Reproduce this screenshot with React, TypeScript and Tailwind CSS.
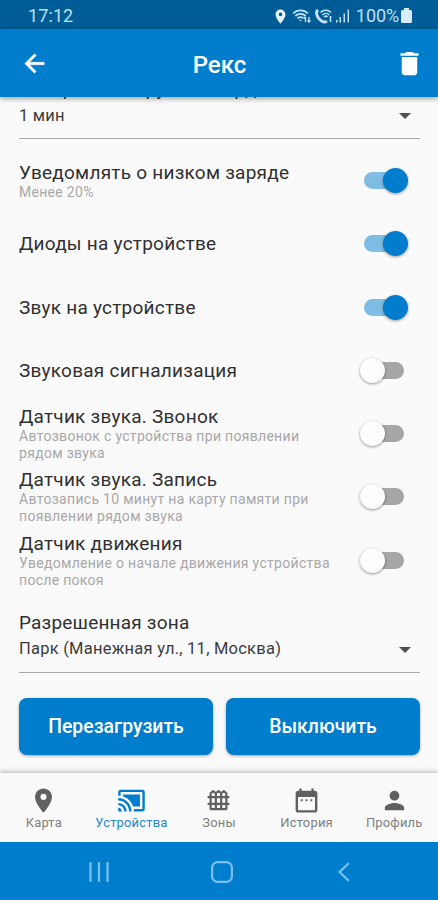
import { useState } from "react";
import type { ReactNode } from "react";
import clsx from "clsx";

type Option = {
  id: string;
  title: string;
  hint?: string;
  on: boolean;
};

const initialOptions: Option[] = [
  { id: "battery", title: "Уведомлять о низком заряде", hint: "Менее 20%", on: true },
  { id: "leds", title: "Диоды на устройстве", on: true },
  { id: "sound", title: "Звук на устройстве", on: true },
  { id: "alarm", title: "Звуковая сигнализация", on: false },
  { id: "call", title: "Датчик звука. Звонок", hint: "Автозвонок с устройства при появлении рядом звука", on: false },
  { id: "record", title: "Датчик звука. Запись", hint: "Автозапись 10 минут на карту памяти при появлении рядом звука", on: false },
  { id: "motion", title: "Датчик движения", hint: "Уведомление о начале движения устройства после покоя", on: false },
];

function Icon({ className, children }: { className?: string; children: ReactNode }) {
  return (
    <svg viewBox="0 0 24 24" fill="currentColor" className={className}>
      {children}
    </svg>
  );
}

const pinPath =
  "M12 2C8.13 2 5 5.13 5 9c0 5.25 7 13 7 13s7-7.75 7-13c0-3.87-3.13-7-7-7zm0 9.5a2.5 2.5 0 0 1 0-5 2.5 2.5 0 0 1 0 5z";

const tabs = [
  { label: "Карта", icon: <path d={pinPath} /> },
  {
    label: "Устройства",
    icon: (
      <path d="M1 18v3h3c0-1.66-1.34-3-3-3zm0-4v2c2.76 0 5 2.24 5 5h2c0-3.87-3.13-7-7-7zm18-7H5v1.63c3.96 1.28 7.09 4.41 8.37 8.37H19V7zM1 10v2c4.97 0 9 4.03 9 9h2c0-6.08-4.93-11-11-11zm20-7H3c-1.1 0-2 .9-2 2v3h2V5h18v14h-7v2h7c1.1 0 2-.9 2-2V5c0-1.1-.9-2-2-2z" />
    ),
  },
  {
    label: "Зоны",
    icon: (
      <path
        d="M5.500 19.500V6L7.600 4.200 9.800 6v13.500M9.800 6 12 4.200 14.200 6v13.500M14.200 6l2.200-1.800L18.500 6v13.500M5.200 19.200h13.600M3 9.200h18M3 14.800h18"
        fill="none"
        stroke="currentColor"
        strokeWidth="1.800"
      />
    ),
  },
  {
    label: "История",
    icon: (
      <path d="M8.800 11H7.200v1.600h1.600zm4 0h-1.600v1.600h1.600zm4 0h-1.600v1.600h1.600zM19 4h-1V2h-2v2H8V2H6v2H5c-1.11 0-1.99.9-1.99 2L3 20c0 1.1.89 2 2 2h14c1.1 0 2-.9 2-2V6c0-1.1-.9-2-2-2zm0 16H5V9h14v11z" />
    ),
  },
  {
    label: "Профиль",
    icon: (
      <path d="M12 12c2.210 0 4-1.790 4-4s-1.790-4-4-4-4 1.790-4 4 1.790 4 4 4zm0 2c-2.670 0-8 1.340-8 4v2h16v-2c0-2.660-5.330-4-8-4z" />
    ),
  },
];

function StatusBar() {
  return (
    <div className="flex h-[29px] shrink-0 items-center bg-[#005c96] pt-[3px] pr-[26px] pl-7 text-[#bfe0f5]">
      <span className="flex-1 text-[18px] leading-6 tracking-[0.1px]">17:12</span>
      <Icon className="mr-[3px] size-[17px] text-[#e3f3fd]">
        <path d={pinPath} />
      </Icon>
      <svg viewBox="0 0 20 16" className="mr-[3px] h-4 w-5" fill="none" stroke="currentColor" strokeWidth="1.8">
        <path d="M1 5.500C5 1.300 12 1.300 16 5.500M3.300 8c3-2.800 7.400-2.800 10.400 0M5.500 10.400c1.800-1.500 4.200-1.500 6 0" />
        <path d="M7 11.800h3L8.500 13.500z" fill="currentColor" stroke="none" />
        <path d="M13.500 14v-5M12 10.500 13.500 9M17 9v5M15.500 12.500 17 14l1.500-1.500" strokeWidth="1.400" />
      </svg>
      <svg viewBox="0 0 18 16" className="mr-[2px] h-4 w-[18px]" fill="none" stroke="currentColor">
        <path d="M3 2C.5 4 1.500 8 4 10.800s5.800 4.200 8 2.400" strokeWidth="3" />
        <path d="M5.500 4.500c3-3 7.500-3 10.500 0M7.300 7c2-2 5-2 7 0M9 9c1.200-1 2.500-1 3.500 0" strokeWidth="1.600" />
        <path d="M15.500 8v6" strokeWidth="1.600" />
      </svg>
      <svg viewBox="0 0 15 16" className="mr-[6px] h-4 w-[15px]" fill="currentColor">
        <path d="M1 12h1.500v2.500H1zM4.500 9H6v5.500H4.500zM8.500 5.500H10v9H8.500zM12.500 1.500H14v13h-1.500z" />
      </svg>
      <span className="text-[18px] leading-6 tracking-[-0.1px]">100%</span>
      <svg viewBox="0 0 11 16" className="ml-[2px] h-4 w-[11px]" fill="#d5ecfa">
        <path d="M3 0h5v2h1.500A1.500 1.500 0 0 1 11 3.500v10A1.500 1.500 0 0 1 9.500 15h-8A1.500 1.500 0 0 1 0 13.500v-10A1.500 1.500 0 0 1 1.500 2H3z" />
      </svg>
    </div>
  );
}

function Header() {
  return (
    <header className="z-10 flex h-[68px] shrink-0 items-center justify-between bg-[#007dcc] pr-[13px] pl-5 text-white shadow-[0_2px_5px_rgba(0,0,0,0.35)]">
      <button type="button">
        <Icon className="size-[29px]">
          <path d="M20 11H7.830l5.590-5.590L12 4l-8 8 8 8 1.410-1.410L7.830 13H20v-2z" stroke="currentColor" strokeWidth=".4" />
        </Icon>
      </button>
      <h1 className="pt-[3px] pr-1 text-[24px] font-medium">Рекс</h1>
      <button type="button">
        <Icon className="size-[31px]">
          <path d="M6 19c0 1.100.9 2 2 2h8c1.100 0 2-.9 2-2V7H6v12zM19 4h-3.500l-1-1h-5l-1 1H5v2h14V4z" />
        </Icon>
      </button>
    </header>
  );
}

function Select({ label, value }: { label: string; value: string }) {
  return (
    <div className="h-[63px] border-b border-[#a9a9a9]">
      <div className="h-[26px] text-[19px] leading-[25px] tracking-[0.2px] whitespace-nowrap">{label}</div>
      <div className="flex h-7 items-center justify-between pr-[9px]">
        <span className="text-[16.5px] tracking-[0.24px] text-[#3c3c3c]">{value}</span>
        <svg viewBox="0 0 12 6" className="h-[6px] w-3" fill="#505050">
          <path d="M0 0h12L6 6z" />
        </svg>
      </div>
    </div>
  );
}

function Toggle({ on, onClick }: { on: boolean; onClick: () => void }) {
  return (
    <button type="button" role="switch" aria-checked={on} onClick={onClick} className="flex w-[49px] shrink-0 items-center">
      <span
        className={clsx(
          "ml-1 flex h-[17px] w-10 items-center rounded-full",
          on ? "justify-end bg-[#7ebee5]" : "justify-start bg-[#a6a6a6]",
        )}
      >
        <span
          className={clsx(
            "size-[25px] shrink-0 rounded-full shadow-[0_1px_3px_rgba(0,0,0,0.4)]",
            on ? "-mr-1 bg-[#007dcc]" : "-ml-1 bg-[#fdfdfd]",
          )}
        />
      </span>
    </button>
  );
}

export default function App() {
  const [options, setOptions] = useState(initialOptions);
  const [tab, setTab] = useState("Устройства");

  function handleToggle(id: string) {
    setOptions((list) => list.map((item) => (item.id === id ? { ...item, on: !item.on } : item)));
  }

  return (
    <div className="flex h-[900px] w-[438px] flex-col overflow-hidden bg-[#fafafa] font-[Roboto,sans-serif] text-[#303030]">
      <StatusBar />
      <Header />

      <main className="-mt-[21px] flex-1 pr-[18px] pl-[19px]">
        <Select label="Интервал выгрузки координат" value="1 мин" />

        <div className="pt-[10px]">
          {options.map((item) => (
            <div key={item.id} className="flex h-[63.25px] items-center justify-between pr-[11px]">
              <div className="w-[325px]">
                <p className="text-[19px] leading-[21px] tracking-[0.24px]">{item.title}</p>
                {item.hint ? (
                  <p className="mt-px -mb-px text-[14px] leading-[17px] tracking-[0.3px] text-[#a8a8a8]">{item.hint}</p>
                ) : null}
              </div>
              <Toggle on={item.on} onClick={() => handleToggle(item.id)} />
            </div>
          ))}
        </div>

        <div className="mt-[18px]">
          <Select label="Разрешенная зона" value="Парк (Манежная ул., 11, Москва)" />
        </div>

        <div className="mt-[25px] grid grid-cols-2 gap-[13px]">
          {["Перезагрузить", "Выключить"].map((label) => (
            <button
              key={label}
              type="button"
              className="h-[57px] rounded-[8px] bg-[#007dcc] pt-px text-[19.4px] font-medium text-white shadow-[0_1px_3px_rgba(0,0,0,0.35)]"
            >
              {label}
            </button>
          ))}
        </div>
      </main>

      <nav className="z-10 grid h-[69px] shrink-0 grid-cols-5 bg-[#fafafa] shadow-[0_-1px_5px_rgba(0,0,0,0.3)]">
        {tabs.map((item) => (
          <button
            key={item.label}
            type="button"
            onClick={() => setTab(item.label)}
            className={clsx("flex flex-col items-center pt-[13px]", tab === item.label ? "text-[#007dcc]" : "text-[#606060]")}
          >
            <Icon className="size-[29px]">{item.icon}</Icon>
            <span className={clsx("text-[13px] leading-[15px] tracking-[0.15px]", tab === item.label ? "text-[#2787c8]" : "text-[#808080]")}>
              {item.label}
            </span>
          </button>
        ))}
      </nav>

      <div className="z-20 flex h-[58px] shrink-0 items-center justify-between bg-[#007dcc] pt-[2px] pr-[88px] pl-[89px] text-[#79c2f0]">
        <svg viewBox="0 0 20 20" className="size-5" fill="none" stroke="currentColor" strokeWidth="2.200">
          <path d="M1.500 0v20M10 0v20M18.500 0v20" />
        </svg>
        <svg viewBox="0 0 22 22" className="mr-[3px] size-[22px]" fill="none" stroke="currentColor" strokeWidth="2.200">
          <rect x="1.100" y="1.100" width="19.800" height="19.800" rx="5.500" />
        </svg>
        <svg viewBox="0 0 12 20" className="h-5 w-3" fill="none" stroke="currentColor" strokeWidth="2.200">
          <path d="M11 1 1.500 10 11 19" />
        </svg>
      </div>
    </div>
  );
}
